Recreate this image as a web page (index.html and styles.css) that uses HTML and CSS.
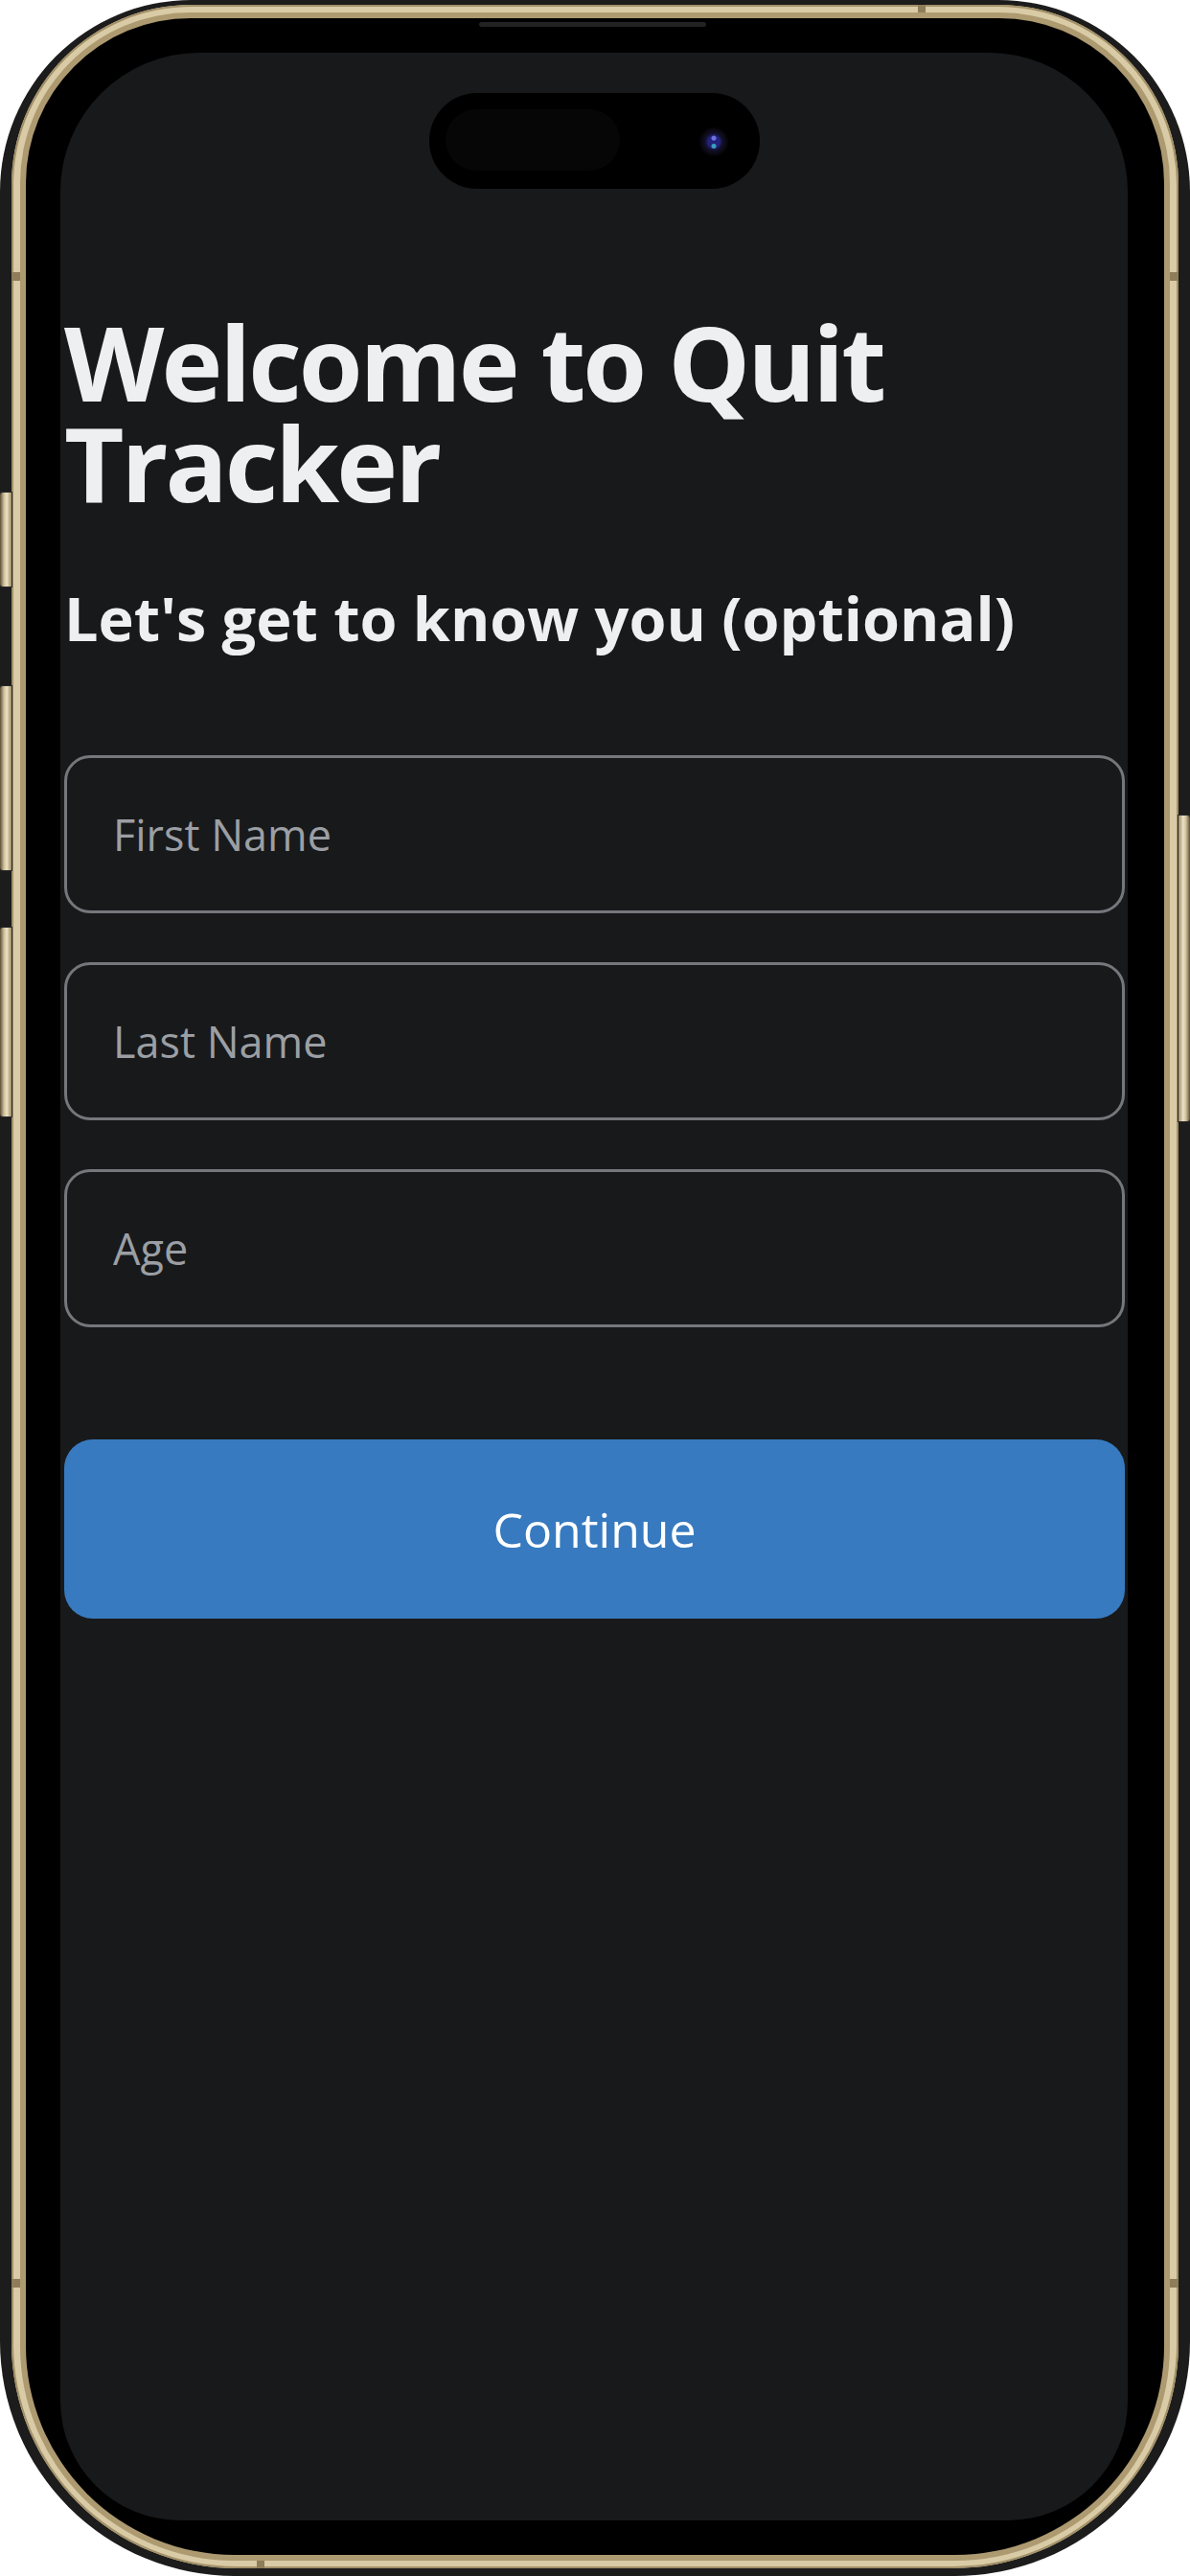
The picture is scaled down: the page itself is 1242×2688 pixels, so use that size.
FILE: index.html
```html
<!DOCTYPE html>
<html lang="en">
<head>
<meta charset="utf-8">
<title>Quit Tracker</title>
<link rel="stylesheet" href="styles.css">
</head>
<body>
<div class="device">
  <span class="side-btn btn-action"></span>
  <span class="side-btn btn-vol-up"></span>
  <span class="side-btn btn-vol-down"></span>
  <span class="side-btn btn-power"></span>
  <span class="band band-left-top"></span>
  <span class="band band-right-top"></span>
  <span class="band band-left-bottom"></span>
  <span class="band band-right-bottom"></span>
  <span class="band band-top"></span>
  <span class="band band-bottom"></span>
  <div class="gold">
    <div class="bezel">
      <span class="speaker"></span>
      <div class="screen">
        <div class="island"><span class="sensor"></span><span class="lens"></span></div>
        <main class="content">
          <h1 class="title">Welcome to Quit Tracker</h1>
          <h2 class="subtitle">Let's get to know you (optional)</h2>
          <form class="form">
            <input class="field" type="text" placeholder="First Name">
            <input class="field" type="text" placeholder="Last Name">
            <input class="field" type="text" placeholder="Age">
            <button class="continue" type="button">Continue</button>
          </form>
        </main>
      </div>
    </div>
  </div>
</div>
</body>
</html>
```
FILE: styles.css
```css
html, body {
  margin: 0;
  padding: 0;
  background: #ffffff;
}

.device {
  position: relative;
  width: 1242px;
  height: 2688px;
  box-sizing: border-box;
  padding: 5px 12px 8px 12px;
  background: #1c1c1c;
  border-radius: 200px 200px 245px 245px;
}

.gold {
  height: 100%;
  box-sizing: border-box;
  padding: 14px 15px;
  background: #d9cba6;
  border-radius: 188px 188px 235px 235px;
  box-shadow: inset 0 0 0 2px #a29068;
}

.bezel {
  position: relative;
  height: 100%;
  box-sizing: border-box;
  padding: 36px 38px 36px 36px;
  background: #000;
  border-radius: 172px 172px 218px 218px;
  box-shadow: 0 0 0 6px #ad9a70;
}

.speaker {
  position: absolute;
  top: 4px;
  left: 473px;
  width: 237px;
  height: 5px;
  border-radius: 3px;
  background: #222222;
}

.screen {
  position: relative;
  height: 100%;
  background: #18191b;
  border-radius: 145px 145px 125px 125px;
  overflow: hidden;
}

.island {
  position: absolute;
  top: 42px;
  left: 50%;
  margin-left: -172px;
  width: 345px;
  height: 100px;
  border-radius: 50px;
  background: #000;
}

.sensor {
  position: absolute;
  left: 17px;
  top: 17px;
  width: 182px;
  height: 64px;
  border-radius: 32px;
  background: #060606;
}

.lens {
  position: absolute;
  left: 281px;
  top: 35px;
  width: 32px;
  height: 32px;
  border-radius: 50%;
  background:
    radial-gradient(circle at 50% 38%, #7070e0 0 2px, transparent 3px),
    radial-gradient(circle at 50% 64%, #3a9fb8 0 2px, transparent 3px),
    radial-gradient(circle, #23237e 0 6px, #10102a 9px, #0d0a16 12px, #000 16px);
}

.content {
  padding: 270px 3px 0 4px;
}

.title {
  margin: 0;
  font-family: "Open Sans", "Noto Sans", sans-serif;
  font-weight: 700;
  font-size: 108px;
  line-height: 105px;
  letter-spacing: -3px;
  color: #eeeff1;
}

.subtitle {
  margin: 67px 0 0;
  font-family: "Open Sans", "Noto Sans", sans-serif;
  font-weight: 700;
  font-size: 63px;
  line-height: 86px;
  color: #eeeff1;
}

.form {
  display: flex;
  flex-direction: column;
  gap: 51px;
  margin-top: 100px;
}

.field {
  display: block;
  width: 100%;
  height: 165px;
  box-sizing: border-box;
  margin: 0;
  padding: 0 0 0 48px;
  border: 3px solid #74777b;
  border-radius: 27px;
  background: transparent;
  font-family: "Open Sans", "Noto Sans", sans-serif;
  font-weight: 400;
  font-size: 45px;
  color: #eeeff1;
  outline: none;
}

.field::placeholder {
  color: #9b9fa4;
  opacity: 1;
}

.continue {
  display: block;
  width: 100%;
  height: 187px;
  margin: 66px 0 0;
  padding: 0;
  border: none;
  border-radius: 30px;
  background: #377abf;
  font-family: "Open Sans", "Noto Sans", sans-serif;
  font-weight: 400;
  font-size: 50px;
  color: #ffffff;
  cursor: pointer;
}

.side-btn {
  position: absolute;
  width: 12px;
  background: linear-gradient(90deg, #5e5037 0%, #cfc09a 35%, #ece2c6 60%, #9c8a63 100%);
  box-shadow: 0 0 0 1px #2a2a2a;
}

.btn-action { left: 0; top: 514px; height: 98px; border-radius: 3px 0 0 3px; }
.btn-vol-up { left: 0; top: 716px; height: 192px; border-radius: 3px 0 0 3px; }
.btn-vol-down { left: 0; top: 968px; height: 197px; border-radius: 3px 0 0 3px; }
.btn-power { right: 0; top: 851px; height: 319px; border-radius: 0 3px 3px 0;
  background: linear-gradient(270deg, #5e5037 0%, #cfc09a 35%, #ece2c6 60%, #9c8a63 100%); }

.band {
  position: absolute;
  background: #8f7d59;
}

.band-left-top { left: 12px; top: 284px; width: 15px; height: 9px; }
.band-right-top { right: 12px; top: 284px; width: 15px; height: 9px; }
.band-left-bottom { left: 12px; top: 2378px; width: 15px; height: 9px; }
.band-right-bottom { right: 12px; top: 2378px; width: 15px; height: 9px; }
.band-top { left: 958px; top: 5px; width: 8px; height: 14px; }
.band-bottom { left: 268px; bottom: 8px; width: 8px; height: 14px; }
```
